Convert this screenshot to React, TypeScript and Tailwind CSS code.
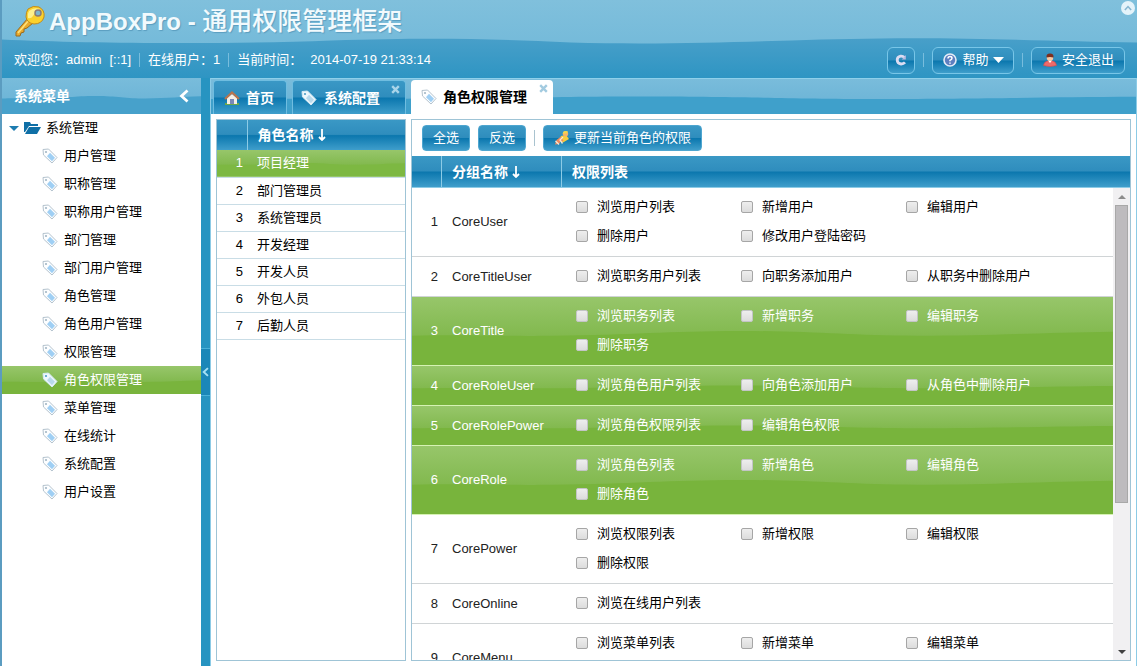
import React, { useState } from 'react';

interface Group {
    name: string;
    powers: string[];
    selected?: boolean;
}

const menuItems = [
    '用户管理', '职称管理', '职称用户管理', '部门管理', '部门用户管理', '角色管理', '角色用户管理',
    '权限管理', '角色权限管理', '菜单管理', '在线统计', '系统配置', '用户设置',
];

const roles = ['项目经理', '部门管理员', '系统管理员', '开发经理', '开发人员', '外包人员', '后勤人员'];

const groups: Group[] = [
    { name: 'CoreUser', powers: ['浏览用户列表', '新增用户', '编辑用户', '删除用户', '修改用户登陆密码'] },
    { name: 'CoreTitleUser', powers: ['浏览职务用户列表', '向职务添加用户', '从职务中删除用户'] },
    { name: 'CoreTitle', powers: ['浏览职务列表', '新增职务', '编辑职务', '删除职务'], selected: true },
    { name: 'CoreRoleUser', powers: ['浏览角色用户列表', '向角色添加用户', '从角色中删除用户'], selected: true },
    { name: 'CoreRolePower', powers: ['浏览角色权限列表', '编辑角色权限'], selected: true },
    { name: 'CoreRole', powers: ['浏览角色列表', '新增角色', '编辑角色', '删除角色'], selected: true },
    { name: 'CorePower', powers: ['浏览权限列表', '新增权限', '编辑权限', '删除权限'] },
    { name: 'CoreOnline', powers: ['浏览在线用户列表'] },
    { name: 'CoreMenu', powers: ['浏览菜单列表', '新增菜单', '编辑菜单', '删除菜单'] },
];

const barBg = 'bg-[linear-gradient(#3a98c5_0%,#2f8dbd_48%,#0b77ae_52%,#3f9ecb_100%)]';
const greenBg = 'bg-linear-to-b from-[#97c66a] to-[#72af36]';

const Wave: React.FC<{ className: string }> = ({ className }) => (
    <svg className={`absolute inset-0 -z-10 w-full h-full ${className}`} viewBox="0 0 100 100" preserveAspectRatio="none" aria-hidden="true">
        <path d="M0 57 C8 55 12 58 20 57 C32 56 36 50 47 50 C58 50 62 57 72 57 C84 57 90 52 100 51 V100 H0 Z" fill="currentColor" />
    </svg>
);

const TagIcon: React.FC<{ tone?: 'light' | 'solid' }> = ({ tone = 'light' }) => {
    const solid = tone === 'solid';
    return (
        <svg className="w-4 h-4 shrink-0" viewBox="0 0 16 16" aria-hidden="true">
            <path d="M1 1.5 L6.5 1 L15 9.5 L10 15 L1.5 7 Z" fill={solid ? '#eef7fc' : '#fdfeff'} stroke={solid ? '#d3e9f4' : '#b4c3ce'} strokeLinejoin="round" />
            <path d="M8 4.8 L13 9.8 L10 13.2 L5 8.2 Z" fill={solid ? '#b8d9ec' : '#9fcff4'} />
            <circle cx="4" cy="4" r="1.1" fill={solid ? '#4b9cc5' : '#a3b7c5'} />
        </svg>
    );
};

const KeyIcon = () => (
    <svg className="w-8 h-8 shrink-0" viewBox="0 0 32 32" aria-hidden="true">
        <path d="M14 13 L2 27 L2 31 L6 31 L7 28 L10 27 L10 24 L13 23 L19 18 Z" fill="#e8a92c" stroke="#9a6a1c" strokeLinejoin="round" />
        <path d="M15 15 L4 28" stroke="#ffe27a" strokeWidth="1.5" />
        <path d="M14 4 Q19 0 25 2 Q31 5 30 12 Q28 19 20 19 Q13 18 12 12 Q12 7 14 4 Z" fill="#fbd12c" stroke="#c08a1c" />
        <path d="M15 6 Q20 2 26 4 Q22 6 19 11 Q17 14 14 13 Q13 9 15 6 Z" fill="#fff08c" />
        <circle cx="24" cy="8" r="3" fill="#7db6cf" stroke="#8b7b78" strokeWidth="1.5" />
    </svg>
);

const HomeIcon = () => (
    <svg className="w-4 h-4 shrink-0" viewBox="0 0 16 16" aria-hidden="true">
        <path d="M1 13 H15 V15 H1 Z" fill="#6da64a" />
        <path d="M3 8 L8 4 L13 8 V14 H3 Z" fill="#f6efe7" />
        <path d="M6 9 H10 V14 H6 Z" fill="#7a88b8" />
        <path d="M1 9 L8 2.5 L15 9" fill="none" stroke="#b8744e" strokeWidth="2.2" />
    </svg>
);

const FolderIcon = () => (
    <svg className="w-[18px] h-4 shrink-0" viewBox="0 0 18 16" aria-hidden="true">
        <path d="M1 2 H7 L8 4 H15 V6 H6 L2 12 H1 Z" fill="#0f6fa6" />
        <path d="M6 7 H18 L14 14 H2 Z" fill="#0f6fa6" />
    </svg>
);

const HelpIcon = () => (
    <svg className="w-4 h-4 shrink-0" viewBox="0 0 16 16" aria-hidden="true">
        <circle cx="8" cy="8" r="6" fill="#5d7fc0" stroke="#e4ecf7" strokeWidth="1.6" />
        <path d="M6 6.4 Q6 4.6 8 4.6 Q10 4.6 10 6.2 Q10 7.3 8 8.3 V9.2 M8 10.4 V11.8" fill="none" stroke="#fff" strokeWidth="1.5" />
    </svg>
);

const UserIcon = () => (
    <svg className="w-4 h-4 shrink-0" viewBox="0 0 16 16" aria-hidden="true">
        <path d="M1.5 13.5 Q2 9.5 5.5 9 H10.5 Q14 9.5 14.5 13.5 Q8 15.5 1.5 13.5 Z" fill="#ee6a6a" stroke="#d24a4e" strokeWidth="0.6" />
        <path d="M6 8.5 H10 L8 11 Z" fill="#fff" />
        <circle cx="8" cy="5.8" r="3.2" fill="#f6c9a4" />
        <path d="M4.5 5.5 Q4 1.5 8 1.5 Q12 1.5 11.5 5.5 Q8 4.5 4.5 5.5 Z" fill="#7c2f20" />
    </svg>
);

const RefreshIcon = () => (
    <svg className="w-4 h-4" viewBox="0 0 16 16" aria-hidden="true">
        <path d="M11.5 5.4 Q9.8 3.8 7.6 4.1 Q4.2 4.7 4.2 8 Q4.3 11.6 8 12 Q10.4 12.1 12 10.4" fill="none" stroke="#dcdcf2" strokeWidth="2.8" />
        <path d="M12.8 3 V7.4 H8.8 Z" fill="#b9badf" />
    </svg>
);

const UpdateIcon = () => (
    <svg className="w-4 h-4 shrink-0" viewBox="0 0 16 16" aria-hidden="true">
        <path d="M7 6 L12 5 L15 9 L9 12.5 L6 10 Z" fill="#f7cd3c" />
        <circle cx="11.5" cy="3.8" r="2.7" fill="#f5b36a" />
        <path d="M8.6 3.4 Q9.6 0 14 1.4 L12.6 3.4 Z" fill="#f3d94a" />
        <path d="M7 6.5 L2.5 10 L1 14.5 L5 14 L6.5 11.5 L9.5 11 Z" fill="#f08a5d" />
        <path d="M9 7 L6 10 L8.5 13.5 M1.5 11 L5 14.5" fill="none" stroke="#f4ead6" strokeWidth="1.3" />
    </svg>
);

const SortArrow = () => (
    <svg className="w-2 h-3" viewBox="0 0 8 12" aria-hidden="true">
        <path d="M4 0 V10 M1 8 L4 11 L7 8" fill="none" stroke="#fff" strokeWidth="1.8" />
    </svg>
);

const Chevron: React.FC<{ className: string }> = ({ className }) => (
    <svg className={className} viewBox="0 0 10 14" aria-hidden="true">
        <path d="M8.5 1.5 L2.5 7 L8.5 12.5" fill="none" stroke="currentColor" strokeWidth="2.8" />
    </svg>
);

const CloseIcon = () => (
    <svg className="w-[9px] h-[9px]" viewBox="0 0 9 9" aria-hidden="true">
        <path d="M1.2 1.2 L7.8 7.8 M7.8 1.2 L1.2 7.8" stroke="currentColor" strokeWidth="2.4" />
    </svg>
);

const HeaderDivider = () => <span className="w-px h-3.5 bg-[#78bddd]" />;

const headerButton = `h-[27px] flex items-center justify-center rounded-md border border-[#78c6e8] text-white ${barBg}`;
const toolButton = `h-[26px] flex items-center rounded border border-[#4ea6d0] text-white ${barBg}`;

const Header = () => (
    <header className="relative isolate shrink-0 bg-linear-to-b from-[#80c0dc] to-[#6cb6d8] text-white">
        <svg className="absolute inset-0 -z-10 w-full h-full" viewBox="0 0 1137 77" preserveAspectRatio="none" aria-hidden="true">
            <defs>
                <linearGradient id="headerLow" x1="0" y1="0" x2="0" y2="1">
                    <stop offset="0" stopColor="#489fc9" />
                    <stop offset="1" stopColor="#2e95c3" />
                </linearGradient>
            </defs>
            <path d="M0 39 C90 43 220 44 330 40 C430 37 480 38 570 42 C690 45 780 39 880 38 C980 37 1060 41 1137 42 V77 H0 Z" fill="url(#headerLow)" />
        </svg>
        <div className="h-[42px] flex items-center pl-3">
            <KeyIcon />
            <h1 className="ml-[3px] text-2xl leading-none font-bold text-[#f2fafd] [text-shadow:1px_1px_1px_#5a9dbf]">
                AppBoxPro - <span className="text-[25px] font-medium">通用权限管理框架</span>
            </h1>
        </div>
        <button type="button" aria-label="折叠" className="absolute right-0.5 top-px w-3.5 h-3.5 rounded-full bg-[#e4f3fa] text-[#86b6d0] flex items-center justify-center">
            <Chevron className="w-1.5 h-2 rotate-90" />
        </button>
        <div className="h-9 px-3 flex items-center justify-between">
            <div className="flex items-center">
                <span>欢迎您：admin</span>
                <span className="ml-2">[::1]</span>
                <span className="mx-2 flex"><HeaderDivider /></span>
                <span>在线用户：1</span>
                <span className="mx-2 flex"><HeaderDivider /></span>
                <span>当前时间：</span>
                <time className="ml-2">2014-07-19 21:33:14</time>
            </div>
            <div className="flex items-center gap-2">
                <button type="button" aria-label="刷新" className={`${headerButton} w-7`}><RefreshIcon /></button>
                <HeaderDivider />
                <button type="button" className={`${headerButton} w-[82px] gap-1`}>
                    <HelpIcon />
                    帮助
                    <svg className="w-[11px] h-1.5" viewBox="0 0 11 6" aria-hidden="true"><path d="M0 0 H11 L5.5 6 Z" fill="#fff" /></svg>
                </button>
                <HeaderDivider />
                <button type="button" className={`${headerButton} w-[94px] gap-1`}>
                    <UserIcon />
                    安全退出
                </button>
            </div>
        </div>
    </header>
);

const Sidebar = () => {
    const [active, setActive] = useState('角色权限管理');

    return (
        <aside className="w-[199px] shrink-0 flex flex-col bg-white">
            <div className="relative isolate h-9 shrink-0 px-3 flex items-center justify-between bg-linear-to-b from-[#79bcdb] to-[#67b1d5] text-white">
                <Wave className="text-[#47a1cb]" />
                <h2 className="text-sm font-bold">系统菜单</h2>
                <button type="button" aria-label="收起菜单" className="text-white"><Chevron className="w-2.5 h-3.5" /></button>
            </div>
            <nav className="text-black">
                <div className="h-7 pl-[7px] flex items-center">
                    <svg className="w-2.5 h-[5px] mr-1" viewBox="0 0 10 5" aria-hidden="true"><path d="M0 0 H10 L5 5 Z" fill="#1d7cb0" /></svg>
                    <FolderIcon />
                    <span className="ml-[5px]">系统管理</span>
                </div>
                <ul>
                    {menuItems.map(item => {
                        const selected = item === active;
                        return (
                            <li key={item}>
                                <a
                                    href="#"
                                    onClick={() => setActive(item)}
                                    className={`relative isolate h-7 pl-10 flex items-center gap-1.5 ${selected ? `${greenBg} text-white` : ''}`}
                                >
                                    {selected && <Wave className="text-[#79b43d]" />}
                                    <TagIcon tone={selected ? 'solid' : 'light'} />
                                    {item}
                                </a>
                            </li>
                        );
                    })}
                </ul>
            </nav>
        </aside>
    );
};

const Tabs = () => (
    <div role="tablist" className="relative isolate h-9 shrink-0 pl-0.5 pt-px flex items-stretch gap-[5px] border-t border-[#8fd0ea] bg-linear-to-b from-[#79bcdb] to-[#67b1d5] text-sm font-bold">
        <Wave className="text-[#3fa0cb]" />
        <button type="button" role="tab" className={`w-[74px] pl-2.5 flex items-center gap-1.5 rounded-t border border-b-0 border-[#6fbde0] text-white ${barBg}`}>
            <HomeIcon />
            首页
        </button>
        <div className={`relative w-[114px] flex rounded-t border border-b-0 border-[#6fbde0] text-white ${barBg}`}>
            <button type="button" role="tab" className="pl-2 flex items-center gap-[7px]">
                <TagIcon tone="solid" />
                系统配置
            </button>
            <button type="button" aria-label="关闭系统配置" className="absolute right-[5px] top-1 text-[#a8d4e9]"><CloseIcon /></button>
        </div>
        <div className="relative w-[142px] flex rounded-t bg-white text-black">
            <button type="button" role="tab" aria-selected="true" className="pl-2.5 flex items-center gap-1.5">
                <TagIcon />
                角色权限管理
            </button>
            <button type="button" aria-label="关闭角色权限管理" className="absolute right-[5px] top-1 text-[#a3cbe0]"><CloseIcon /></button>
        </div>
    </div>
);

const RoleGrid = () => {
    const [active, setActive] = useState(0);

    return (
        <section className="w-[190px] shrink-0 border border-[#9fc4d6] bg-white overflow-hidden">
            <table className="w-full table-fixed border-collapse">
                <thead>
                    <tr className={`h-[30px] text-white text-sm ${barBg}`}>
                        <th className="w-[30px] border-r border-[#8ccbe6]"></th>
                        <th className="pl-2.5 py-0 text-left font-bold">
                            <span className="flex items-center gap-1">角色名称<SortArrow /></span>
                        </th>
                    </tr>
                </thead>
                <tbody>
                    {roles.map((role, i) => (
                        <tr
                            key={role}
                            onClick={() => setActive(i)}
                            className={`relative isolate h-[27px] border-b border-[#c9dde6] ${i === active ? `${greenBg} text-white` : 'text-black'}`}
                        >
                            <td className="p-0 pr-1 text-right">
                                {i === active && <Wave className="text-[#7db842]" />}
                                {i + 1}
                            </td>
                            <td className="p-0 pl-2.5">{role}</td>
                        </tr>
                    ))}
                </tbody>
            </table>
        </section>
    );
};

const GroupRow: React.FC<{ group: Group; index: number }> = ({ group, index }) => (
    <tr className={`relative isolate border-b ${group.selected ? `border-[#d6f2b4] text-white ${greenBg}` : 'border-[#d0d4d6] text-[#222]'}`}>
        <td className="w-[30px] p-0 pr-1 text-right">
            {group.selected && <Wave className="text-[#78b43c]" />}
            {index + 1}
        </td>
        <td className="w-[120px] p-0 pl-2.5">{group.name}</td>
        <td className="p-0 pt-1 pb-1.5 pl-3.5">
            <div className="flex flex-wrap">
                {group.powers.map(power => (
                    <label key={power} className={`w-[165px] h-[29px] flex items-center gap-[9px] ${group.selected ? '' : 'text-black'}`}>
                        <input
                            type="checkbox"
                            className={`appearance-none w-3 h-3 shrink-0 rounded-[2px] border bg-linear-to-b from-[#eeeeee] to-[#dcdcdc] checked:bg-[#0b77ae] ${group.selected ? 'border-[#c3c5c6]' : 'border-[#a6a6a6]'}`}
                        />
                        {power}
                    </label>
                ))}
            </div>
        </td>
    </tr>
);

const PowerGrid = () => (
    <section className="flex-1 min-w-0 flex flex-col border border-[#9fc4d6] bg-white">
        <div className="h-9 shrink-0 pl-2.5 flex items-center gap-2">
            <button type="button" className={`${toolButton} w-12 justify-center`}>全选</button>
            <button type="button" className={`${toolButton} w-12 justify-center`}>反选</button>
            <span className="w-px h-4 bg-[#a9c3cf]" />
            <button type="button" className={`${toolButton} px-2.5 gap-1`}>
                <UpdateIcon />
                更新当前角色的权限
            </button>
        </div>
        <div className={`h-8 shrink-0 flex items-stretch border-b border-[#8ccbe6] text-white text-sm font-bold ${barBg}`}>
            <div className="w-[30px] border-r border-[#8ccbe6]"></div>
            <div className="w-[120px] pl-2.5 flex items-center gap-1 border-r border-[#8ccbe6]">分组名称<SortArrow /></div>
            <div className="pl-2.5 flex items-center">权限列表</div>
        </div>
        <div className="flex-1 min-h-0 flex">
            <div className="flex-1 min-w-0 overflow-y-auto [scrollbar-width:none]">
                <table className="w-full table-fixed border-collapse">
                    <colgroup>
                        <col className="w-[30px]" />
                        <col className="w-[120px]" />
                        <col />
                    </colgroup>
                    <tbody>
                        {groups.map((group, i) => <GroupRow key={group.name} group={group} index={i} />)}
                    </tbody>
                </table>
            </div>
            <div className="w-[17px] shrink-0 flex flex-col items-center bg-[#f1f0f2]">
                <button type="button" aria-label="向上滚动" className="h-[17px] flex items-center">
                    <svg className="w-2 h-1" viewBox="0 0 8 4" aria-hidden="true"><path d="M4 0 L8 4 H0 Z" fill="#8c8c8c" /></svg>
                </button>
                <div className="flex-1 w-[13px]">
                    <div className="w-full h-[68%] border border-[#a8a8a8] bg-[#bdbbbe]"></div>
                </div>
                <button type="button" aria-label="向下滚动" className="h-[17px] flex items-center">
                    <svg className="w-2 h-1" viewBox="0 0 8 4" aria-hidden="true"><path d="M0 0 H8 L4 4 Z" fill="#404040" /></svg>
                </button>
            </div>
        </div>
    </section>
);

export default function App() {
    return (
        <div className="h-screen flex flex-col overflow-hidden bg-[#2794c1] border-l-2 border-[#5b9cc0] text-[13px] leading-5 font-['Liberation_Sans','Noto_Sans_CJK_SC',sans-serif]">
            <Header />
            <div className="flex-1 min-h-0 flex">
                <Sidebar />
                <div className="w-[9px] shrink-0 flex items-center justify-center">
                    <button type="button" aria-label="折叠侧栏" className="w-full h-12 flex items-center justify-center border-y border-[#4bb0d8] bg-[#1b87b8] text-[#a5e0f5]">
                        <Chevron className="w-[7px] h-3" />
                    </button>
                </div>
                <main className="flex-1 min-w-0 flex flex-col bg-white border-x border-[#8ccbe6]">
                    <Tabs />
                    <div className="flex-1 min-h-0 flex gap-[5px] p-[5px]">
                        <RoleGrid />
                        <PowerGrid />
                    </div>
                </main>
            </div>
        </div>
    );
}
